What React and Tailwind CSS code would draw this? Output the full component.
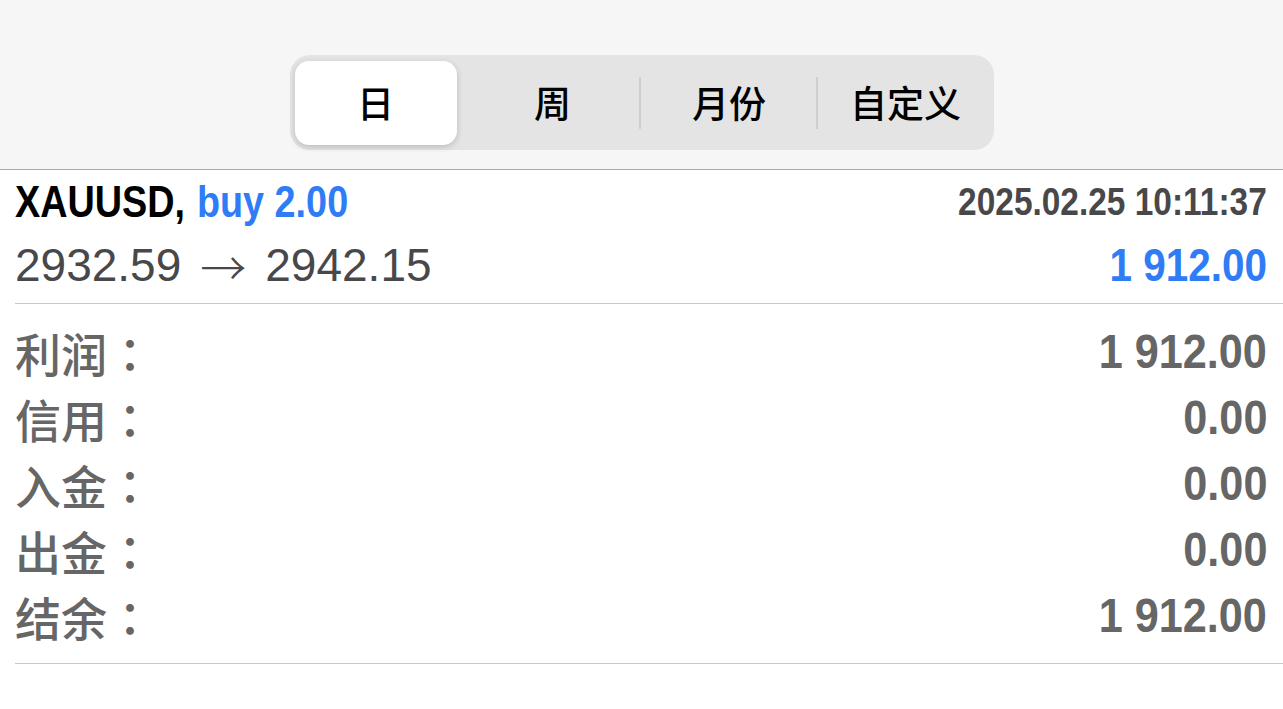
const tabs = ['日', '周', '月份', '自定义']

const rows = [
  { label: '利润', value: '1 912.00' },
  { label: '信用', value: '0.00' },
  { label: '入金', value: '0.00' },
  { label: '出金', value: '0.00' },
  { label: '结余', value: '1 912.00' },
]

const cjk = { fontFamily: '"Noto Sans CJK SC", "Noto Sans", sans-serif' }
const cjkJp = { fontFamily: '"Noto Sans CJK JP", "Noto Sans", sans-serif' }
const sans = { fontFamily: '"Liberation Sans", Arial, sans-serif' }

export default function App() {
  return (
    <div className="w-[1283px] h-[709px] bg-white overflow-hidden">
      {/* Period switcher */}
      <div className="h-[170px] bg-[#f6f6f6] border-b border-[#a8a8a8] flex justify-center pt-[55px]">
        <div className="w-[704px] h-[95px] bg-[#e4e4e4] rounded-[20px] pl-[5px] pt-[6px] pb-[5px] grid grid-cols-[170px_176px_177px_1fr]">
          {tabs.map((t, i) => (
            <div key={t} className="relative h-full flex items-center">
              {i === 0 ? (
                <div
                  className="h-full w-[162px] bg-white rounded-[14px] shadow-[0_2px_6px_rgba(0,0,0,0.18)] flex items-center justify-center text-[37px] font-medium text-black"
                  style={cjk}
                >
                  {t}
                </div>
              ) : (
                <div className="w-full flex items-center justify-center text-[37px] font-medium text-black" style={cjk}>
                  {t}
                </div>
              )}
              {i > 0 && i < 3 && (
                <div className="absolute right-0 top-[16px] bottom-[16px] w-[2px] bg-[#cfcfcf]" />
              )}
            </div>
          ))}
        </div>
      </div>

      {/* Deal */}
      <div className="pl-[15px]">
        <div className="pr-[16px]">
          <div className="h-[64px] flex items-center justify-between">
            <div className="inline-block origin-left scale-x-[0.84] whitespace-nowrap text-[45px] font-bold" style={sans}>
              <span className="text-black">XAUUSD,</span>
              <span className="text-[#2f7cf5] ml-[14px]">buy 2.00</span>
            </div>
            <div className="inline-block origin-right scale-x-[0.88] whitespace-nowrap text-[38px] font-bold text-[#48484a]" style={sans}>
              2025.02.25 10:11:37
            </div>
          </div>
          <div className="h-[69px] pb-[6px] flex items-center justify-between">
            <div className="flex items-center whitespace-nowrap text-[46px] text-[#48484a]" style={sans}>
              <span>2932.59</span>
              <span className="mx-[19px] font-light" style={cjk}>→</span>
              <span>2942.15</span>
            </div>
            <div className="inline-block origin-right scale-x-[0.88] whitespace-nowrap text-[46px] font-bold text-[#2f7cf5]" style={sans}>
              1 912.00
            </div>
          </div>
        </div>
        <div className="h-px bg-[#c8c8c8]" />

        <div className="pr-[16px] pt-[15px] pb-[14px]">
          {rows.map((r) => (
            <div key={r.label} className="h-[66px] flex items-center justify-between text-[#666666]">
              <div className="flex items-center text-[46px] font-medium" style={cjkJp}>
                <span style={cjk}>{r.label}</span>
                <span>：</span>
              </div>
              <div className="inline-block origin-right scale-x-[0.9] whitespace-nowrap text-[48px] font-bold" style={sans}>
                {r.value}
              </div>
            </div>
          ))}
        </div>
        <div className="h-px bg-[#c8c8c8]" />
      </div>
    </div>
  )
}
